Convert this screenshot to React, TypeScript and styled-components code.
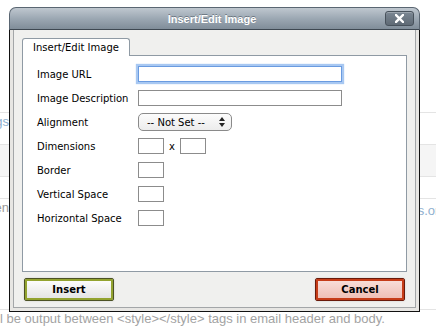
import styled, { createGlobalStyle } from 'styled-components'

const GlobalStyle = createGlobalStyle`
  html, body {
    margin: 0;
    padding: 0;
    background: #fff;
  }
`

const uiFont = `"DejaVu Sans", Verdana, sans-serif`

export default function App() {
  return (
    <>
      <GlobalStyle />
      <Page>
        <Backdrop>
          <TopBlock />
          <BackRow $height={32}>
            <ClipLeft>
              <LinkText>Settings</LinkText>
            </ClipLeft>
          </BackRow>
          <BackRow $height={32} $shaded />
          <BackRow $height={22} />
          <BackRow $height={111}>
            <ClipLeft>
              <MutedText>Screen</MutedText>
            </ClipLeft>
            <ClipRight>
              <LinkText>fonts.org</LinkText>
            </ClipRight>
          </BackRow>
          <FootNote>l be output between &lt;style&gt;&lt;/style&gt; tags in email header and body.</FootNote>
        </Backdrop>

        <Dialog>
          <TitleBar>
            <span />
            <Title>Insert/Edit Image</Title>
            <CloseButton aria-label="Close">
              <svg width="9" height="9" viewBox="0 0 9 9">
                <path d="M1 1 L8 8 M8 1 L1 8" stroke="#fff" strokeWidth="2.4" strokeLinecap="square" />
              </svg>
            </CloseButton>
          </TitleBar>
          <Body>
            <Frame>
              <Tabs>
                <Tab>Insert/Edit Image</Tab>
              </Tabs>
              <Panel>
                <Label>Image URL</Label>
                <Field><TextInput $width={204} $focused autoFocus /></Field>
                <Label>Image Description</Label>
                <Field><TextInput $width={204} /></Field>
                <Label>Alignment</Label>
                <Field>
                  <Select>
                    <span>-- Not Set --</span>
                    <svg width="6" height="10" viewBox="0 0 6 10">
                      <path d="M0 4 L3 0 L6 4 Z M0 6 L3 10 L6 6 Z" fill="#222" />
                    </svg>
                  </Select>
                </Field>
                <Label>Dimensions</Label>
                <Field>
                  <TextInput $width={26} />
                  <Times>x</Times>
                  <TextInput $width={26} />
                </Field>
                <Label>Border</Label>
                <Field><TextInput $width={26} /></Field>
                <Label>Vertical Space</Label>
                <Field><TextInput $width={26} /></Field>
                <Label>Horizontal Space</Label>
                <Field><TextInput $width={26} /></Field>
              </Panel>
              <Buttons>
                <ActionButton $variant="insert">Insert</ActionButton>
                <ActionButton $variant="cancel">Cancel</ActionButton>
              </Buttons>
            </Frame>
          </Body>
        </Dialog>
      </Page>
    </>
  )
}

const Page = styled.div`
  position: relative;
  width: 436px;
  height: 326px;
  overflow: hidden;
  background: #fff;
`

const Backdrop = styled.div`
  display: flex;
  flex-direction: column;
  font-family: "Liberation Sans", Arial, sans-serif;
  font-size: 13px;
`

const TopBlock = styled.div`
  height: 112px;
  border-bottom: 1px solid #e4e4e4;
`

const BackRow = styled.div<{ $height: number; $shaded?: boolean }>`
  display: flex;
  justify-content: space-between;
  align-items: flex-start;
  height: ${(p) => p.$height}px;
  padding-top: 0;
  box-sizing: border-box;
  background: ${(p) => (p.$shaded ? '#f5f5f5' : '#fff')};
  border-bottom: 1px solid #e4e4e4;
`

const ClipLeft = styled.div`
  display: flex;
  justify-content: flex-end;
  width: 9px;
  white-space: nowrap;
  overflow: hidden;
  padding-top: 1px;
`

const ClipRight = styled.div`
  width: 40px;
  white-space: nowrap;
  overflow: hidden;
  padding-top: 4px;
`

const LinkText = styled.span`
  color: #8fb0cf;
`

const MutedText = styled.span`
  color: #9a9a9a;
`

const FootNote = styled.div`
  padding: 1px 0 0 0;
  color: #a3a3a3;
  white-space: nowrap;
`

const Dialog = styled.div`
  position: absolute;
  left: 9px;
  top: 7px;
  width: 411px;
  display: flex;
  flex-direction: column;
  font-family: ${uiFont};
  font-size: 10px;
  color: #000;
`

const TitleBar = styled.div`
  display: grid;
  grid-template-columns: 1fr auto 1fr;
  align-items: center;
  height: 23px;
  box-sizing: border-box;
  padding: 0 5px 0 0;
  border: 1px solid #5a6672;
  border-bottom-color: #3e4852;
  border-radius: 7px 7px 0 0;
  background: linear-gradient(#bfc7cf, #9ca8b3 50%, #808d99);
`

const Title = styled.div`
  font-family: "Liberation Sans", Arial, sans-serif;
  font-weight: bold;
  font-size: 11px;
  color: #fff;
  text-shadow: 0 -1px 0 rgba(40, 50, 60, 0.45);
`

const CloseButton = styled.div`
  justify-self: end;
  display: flex;
  align-items: center;
  justify-content: center;
  width: 29px;
  height: 15px;
  box-sizing: border-box;
  border: 1px solid #48525c;
  border-radius: 3px;
  background: linear-gradient(#7b8793, #5f6a75);
  box-shadow: inset 0 1px 0 rgba(255, 255, 255, 0.25);
`

const Body = styled.div`
  padding: 0 3px 3px;
  background: #e7e6e3;
  border: 1px solid #111;
  border-top: none;
`

const Frame = styled.div`
  display: flex;
  flex-direction: column;
  padding: 8px 8px 6px;
  background: #f0f0ee;
  border: 1px solid #a3a6a8;
  border-top: none;
`

const Tabs = styled.div`
  display: flex;
  position: relative;
  z-index: 1;
  margin-bottom: -1px;
`

const Tab = styled.div`
  height: 18px;
  box-sizing: border-box;
  padding: 2px 10px 0 10px;
  border: 1px solid #8f9aa4;
  border-bottom: none;
  border-radius: 3px 3px 0 0;
  background: #fff;
  line-height: 14px;
`

const Panel = styled.div`
  display: grid;
  grid-template-columns: 101px 1fr;
  grid-auto-rows: 24px;
  align-items: center;
  align-content: start;
  height: 217px;
  box-sizing: border-box;
  padding: 6px 0 0 14px;
  background: #fff;
  border: 1px solid #8f9aa4;
`

const Label = styled.div`
  white-space: nowrap;
`

const Field = styled.div`
  display: flex;
  align-items: center;
  gap: 5px;
`

const TextInput = styled.input<{ $width: number; $focused?: boolean }>`
  width: ${(p) => p.$width}px;
  height: 16px;
  box-sizing: border-box;
  margin: 0;
  padding: 0 2px;
  font-family: ${uiFont};
  font-size: 10px;
  background: #fff;
  border: 1px solid ${(p) => (p.$focused ? '#6a9be0' : '#8c8c8c')};
  box-shadow: ${(p) => (p.$focused ? '0 0 1px 2px #a8c8f2' : 'none')};
  outline: none;
  caret-color: #000;
`

const Times = styled.span`
  font-size: 10px;
`

const Select = styled.div`
  display: flex;
  align-items: center;
  justify-content: space-between;
  width: 94px;
  height: 18px;
  box-sizing: border-box;
  padding: 0 6px 0 8px;
  border: 1px solid #8a8a8a;
  border-radius: 5px;
  background: linear-gradient(#fcfcfc, #ececec);
`

const buttonColors = {
  insert: { outer: '#4c5224', ring: '#93a330', top: '#ffffff', bottom: '#e2e2e2' },
  cancel: { outer: '#6a1a0a', ring: '#c63c18', top: '#f9e0db', bottom: '#eebcb2' },
}

const Buttons = styled.div`
  display: flex;
  justify-content: space-between;
  margin-top: 6px;
  padding: 0 2px;
`

const ActionButton = styled.div<{ $variant: 'insert' | 'cancel' }>`
  display: flex;
  align-items: center;
  justify-content: center;
  width: 90px;
  height: 23px;
  box-sizing: border-box;
  border: 1px solid ${(p) => buttonColors[p.$variant].outer};
  border-radius: 2px;
  box-shadow: inset 0 0 0 2px ${(p) => buttonColors[p.$variant].ring}, 0 0 2px rgba(0, 0, 0, 0.15);
  background: linear-gradient(${(p) => buttonColors[p.$variant].top}, ${(p) => buttonColors[p.$variant].bottom});
  font-weight: bold;
  font-size: 10px;
  color: #000;
`
